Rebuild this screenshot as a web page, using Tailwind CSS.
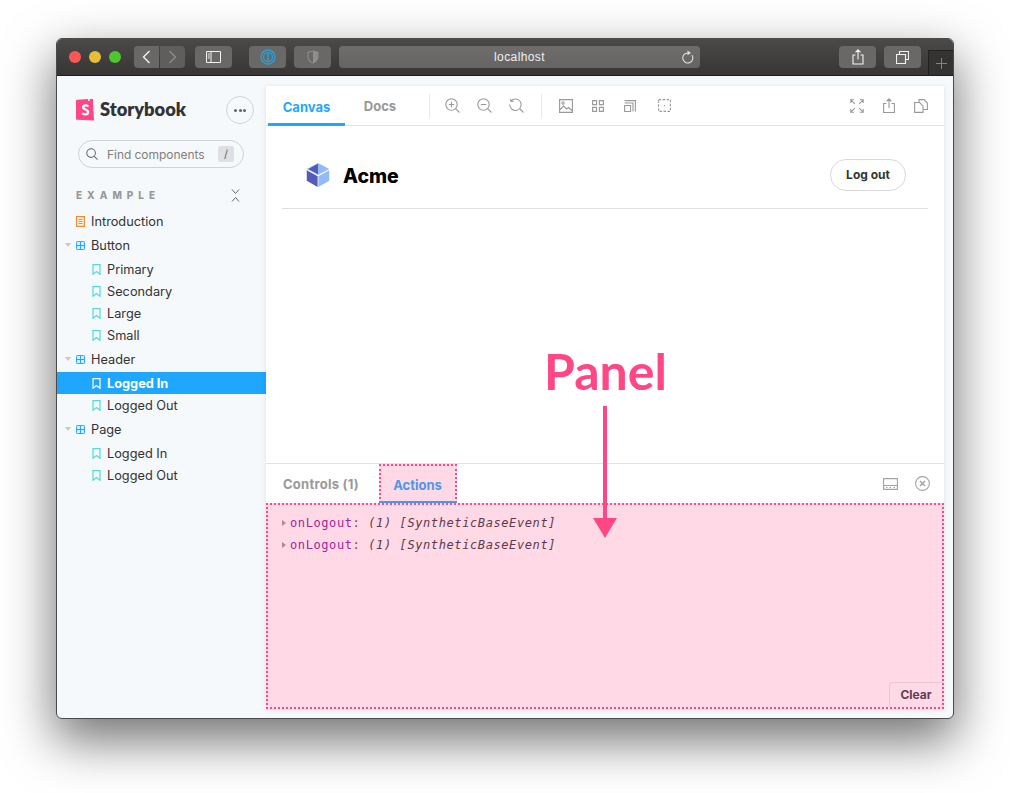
<!DOCTYPE html>
<html lang="en">
<head>
    <meta charset="UTF-8">
    <meta name="viewport" content="width=device-width, initial-scale=1.0">
    <title>Storybook panel</title>
    <script src="https://cdn.jsdelivr.net/npm/@tailwindcss/browser@4"></script>
</head>
<body class="bg-white h-[793px] overflow-hidden font-['Inter','Noto_Sans',sans-serif]">
    <!-- Icon set -->
    <svg class="hidden">
        <symbol id="bookmark" viewBox="0 0 9 11"><path d="M1 .7h7v9.6L4.500 7.600 1 10.300z" fill="none" stroke="currentColor" stroke-width="1.200"/></symbol>
        <symbol id="grid" viewBox="0 0 10 10"><path d="M1.500.5h7a1 1 0 0 1 1 1v7a1 1 0 0 1-1 1h-7a1 1 0 0 1-1-1v-7a1 1 0 0 1 1-1zM5 .5v9M.5 5h9" fill="#d8eefe" stroke="currentColor" stroke-width="1.100"/></symbol>
        <symbol id="caret" viewBox="0 0 6 4"><path d="M0 0h6L3 4z" fill="currentColor"/></symbol>
    </svg>

    <!-- Safari window -->
    <div class="ml-[56px] mt-[38px] w-[898px] h-[681px] flex flex-col rounded-[6px] border border-[#4a4a4a] bg-[#f6f9fc] shadow-[0_20px_50px_2px_rgba(0,0,0,0.55)] overflow-hidden">
        <!-- Title bar -->
        <div class="h-[37px] shrink-0 flex items-start pt-[7px] bg-gradient-to-b from-[#4c4a48] to-[#383634] border-b border-[#1f1e1d] relative">
            <div class="w-[12px] h-[12px] ml-[12px] mt-[5px] rounded-full bg-[#fc5753]"></div>
            <div class="w-[12px] h-[12px] ml-[8px] mt-[5px] rounded-full bg-[#e6bd35]"></div>
            <div class="w-[12px] h-[12px] ml-[8px] mt-[5px] rounded-full bg-[#4fc52f]"></div>
            <div class="ml-[13px] w-[25px] h-[22px] rounded-l-[4px] bg-[#696866] flex items-center justify-center">
                <svg width="9" height="14" viewBox="0 0 9 14"><path d="M7.500 1 1.500 7l6 6" fill="none" stroke="#f2f2f2" stroke-width="1.400"/></svg>
            </div>
            <div class="ml-px w-[25px] h-[22px] rounded-r-[4px] bg-[#5f5e5c] flex items-center justify-center">
                <svg width="9" height="14" viewBox="0 0 9 14"><path d="M1.500 1l6 6-6 6" fill="none" stroke="#8e8d8b" stroke-width="1.400"/></svg>
            </div>
            <div class="ml-[10px] w-[37px] h-[22px] rounded-[4px] bg-[#696866] flex items-center justify-center">
                <svg width="15" height="12" viewBox="0 0 15 12"><path d="M.5.5h14v11H.5zM5 .5v11M1.800 3h2M1.800 5h2M1.800 7h2" fill="none" stroke="#f2f2f2"/></svg>
            </div>
            <div class="ml-[17px] w-[37px] h-[22px] rounded-[4px] bg-[#696866] flex items-center justify-center">
                <svg width="16" height="16" viewBox="0 0 16 16"><circle cx="8" cy="8" r="7" fill="none" stroke="#2a9fd8" stroke-width="1.300"/><circle cx="8" cy="8" r="4.500" fill="none" stroke="#2a9fd8" stroke-width="1.300"/><path d="M8 4.500v7" stroke="#2a9fd8" stroke-width="1.600"/></svg>
            </div>
            <div class="ml-[8px] w-[37px] h-[22px] rounded-[4px] bg-[#696866] flex items-center justify-center">
                <svg width="12" height="14" viewBox="0 0 12 14"><path d="M6 .5 11.500 2v4.500c0 3.500-2.500 5.800-5.500 7-3-1.200-5.500-3.500-5.500-7V2z" fill="#8f8e8c"/><path d="M6 1.500v11c-2.300-1-4.500-3-4.500-6V2.800z" fill="#696866"/></svg>
            </div>
            <div class="ml-[8px] w-[361px] h-[22px] rounded-[4px] bg-gradient-to-b from-[#6e6d6b] to-[#656462] flex items-center justify-center relative">
                <span class="text-[12px] text-[#f0f0f0] font-['Liberation_Sans',sans-serif] tracking-[0.4px]">localhost</span>
                <svg class="absolute right-[6px] top-[4px]" width="13" height="14" viewBox="0 0 13 14"><path d="M10.800 5A5 5 0 1 1 7 3" fill="none" stroke="#dedede" stroke-width="1.100"/><path d="M6.500 .5 10 3 6.500 5.300z" fill="#dedede"/></svg>
            </div>
            <div class="ml-[139px] w-[37px] h-[22px] rounded-[4px] bg-[#696866] flex items-center justify-center">
                <svg width="12" height="16" viewBox="0 0 12 16"><path d="M3.500 6H1v9h10V6H8.500M6 10.500V1M3.500 3.300 6 .8l2.500 2.500" fill="none" stroke="#f2f2f2" stroke-width="1.100"/></svg>
            </div>
            <div class="ml-[8px] w-[37px] h-[22px] rounded-[4px] bg-[#696866] flex items-center justify-center">
                <svg width="13" height="13" viewBox="0 0 13 13"><path d="M3.500 3V.5h9v8H10M.5 3.500h9v9h-9z" fill="none" stroke="#f2f2f2" stroke-width="1.100"/></svg>
            </div>
            <!-- New tab button -->
            <div class="absolute right-0 bottom-0 w-[25px] h-[25px] bg-[#353331] border-l border-t border-[#222] flex items-center justify-center">
                <svg width="11" height="11" viewBox="0 0 11 11"><path d="M5.500 0v11M0 5.500h11" stroke="#85837f"/></svg>
            </div>
        </div>

        <div class="flex-1 flex min-h-0">
            <!-- Sidebar -->
            <aside class="w-[209px] shrink-0 pt-[20px] text-[12.75px] text-[#333]">
                <div class="h-[28px] pl-[19px] pr-[12px] flex items-center justify-between">
                    <div class="flex items-center">
                        <svg width="18" height="22" viewBox="0 0 18 22">
                            <path d="M1 .8 12.300.1l-.1 2 1.500-.1.100-2L17 0l1 21.500-17-.8a1 1 0 0 1-1-1V1.800a1 1 0 0 1 1-1z" fill="#ff4785"/>
                            <path d="M12.300 7.500c-.7-1.400-5-1.900-5.200.6-.2 2.800 5.300 2 5 5.300-.2 2.600-4.600 2.400-5.700.6" fill="none" stroke="#fff" stroke-width="2.300"/>
                        </svg>
                        <span class="ml-[6px] text-[18.3px] font-extrabold text-[#333] font-['Lato','Noto_Sans',sans-serif]">Storybook</span>
                    </div>
                    <div class="w-[28px] h-[28px] rounded-full border border-[#cfd3d6] flex items-center justify-center gap-[1.500px]">
                        <span class="w-[3px] h-[3px] rounded-full bg-[#666]"></span>
                        <span class="w-[3px] h-[3px] rounded-full bg-[#666]"></span>
                        <span class="w-[3px] h-[3px] rounded-full bg-[#666]"></span>
                    </div>
                </div>
                <div class="mt-[16px] ml-[21px] mr-[22px] h-[28px] rounded-full border border-[#cfd3d6] flex items-center pl-[7px] pr-[9px]">
                    <svg width="12" height="12" viewBox="0 0 13 13"><circle cx="5.500" cy="5.500" r="4.700" fill="none" stroke="#666" stroke-width="1.100"/><path d="m9 9 3.500 3.500" stroke="#666" stroke-width="1.100"/></svg>
                    <span class="ml-[9px] mt-[2px] text-[12px] text-[#808080] tracking-[-0.05px]">Find components</span>
                    <span class="ml-auto w-[16px] h-[16px] rounded-[2px] bg-[#dde1e4] text-[11px] text-[#666] flex items-center justify-center">/</span>
                </div>
                <div class="mt-[19px] h-[16px] pl-[19px] pr-[26px] flex items-center justify-between">
                    <span class="text-[10px] font-extrabold tracking-[5px] text-[#999]">EXAMPLE</span>
                    <svg width="9" height="13" viewBox="0 0 9 13"><path d="m1 .5 3.500 4 3.500-4M1 12.500l3.500-4 3.500 4" fill="none" stroke="#666" stroke-width="1"/></svg>
                </div>

                <!-- Tree -->
                <div class="mt-[7px] [&_span]:mt-[2px]">
                    <div class="h-[22px] pl-[19px] flex items-center">
                        <svg class="mr-[6px]" width="9" height="11" viewBox="0 0 9 11"><path d="M.6.6h7.800v9.800H.6z" fill="#fff3e6" stroke="#f58a2e" stroke-width="1.200"/><path d="M2.500 3.500h4M2.500 5.500h4M2.500 7.500h4" stroke="#f58a2e"/></svg>
                        <span>Introduction</span>
                    </div>
                    <div class="mt-0.5 h-[22px] pl-[8px] flex items-center">
                        <svg class="mr-[5px] text-[#c8c8c8]" width="6" height="4"><use href="#caret"/></svg>
                        <svg class="mr-[6px] text-[#1ea7fd]" width="9" height="9"><use href="#grid"/></svg>
                        <span>Button</span>
                    </div>
                    <div class="mt-0.5 h-[22px] pl-[35px] flex items-center">
                        <svg class="mr-[6px] text-[#4fdcd8]" width="9" height="11"><use href="#bookmark"/></svg>
                        <span>Primary</span>
                    </div>
                    <div class="h-[22px] pl-[35px] flex items-center">
                        <svg class="mr-[6px] text-[#4fdcd8]" width="9" height="11"><use href="#bookmark"/></svg>
                        <span>Secondary</span>
                    </div>
                    <div class="h-[22px] pl-[35px] flex items-center">
                        <svg class="mr-[6px] text-[#4fdcd8]" width="9" height="11"><use href="#bookmark"/></svg>
                        <span>Large</span>
                    </div>
                    <div class="h-[22px] pl-[35px] flex items-center">
                        <svg class="mr-[6px] text-[#4fdcd8]" width="9" height="11"><use href="#bookmark"/></svg>
                        <span>Small</span>
                    </div>
                    <div class="mt-0.5 h-[22px] pl-[8px] flex items-center">
                        <svg class="mr-[5px] text-[#c8c8c8]" width="6" height="4"><use href="#caret"/></svg>
                        <svg class="mr-[6px] text-[#1ea7fd]" width="9" height="9"><use href="#grid"/></svg>
                        <span>Header</span>
                    </div>
                    <div class="mt-0.5 h-[22px] pl-[35px] flex items-center bg-[#1ea7fd] text-white font-bold">
                        <svg class="mr-[6px] text-white" width="9" height="11"><use href="#bookmark"/></svg>
                        <span>Logged In</span>
                    </div>
                    <div class="h-[22px] pl-[35px] flex items-center">
                        <svg class="mr-[6px] text-[#4fdcd8]" width="9" height="11"><use href="#bookmark"/></svg>
                        <span>Logged Out</span>
                    </div>
                    <div class="mt-0.5 h-[22px] pl-[8px] flex items-center">
                        <svg class="mr-[5px] text-[#c8c8c8]" width="6" height="4"><use href="#caret"/></svg>
                        <svg class="mr-[6px] text-[#1ea7fd]" width="9" height="9"><use href="#grid"/></svg>
                        <span>Page</span>
                    </div>
                    <div class="mt-0.5 h-[22px] pl-[35px] flex items-center">
                        <svg class="mr-[6px] text-[#4fdcd8]" width="9" height="11"><use href="#bookmark"/></svg>
                        <span>Logged In</span>
                    </div>
                    <div class="h-[22px] pl-[35px] flex items-center">
                        <svg class="mr-[6px] text-[#4fdcd8]" width="9" height="11"><use href="#bookmark"/></svg>
                        <span>Logged Out</span>
                    </div>
                </div>
            </aside>

            <!-- Main area -->
            <div class="flex-1 min-w-0 pt-[10px] pr-[9px] pb-[9px]">
                <main class="relative h-full flex flex-col bg-white shadow-[0_1px_5px_rgba(0,0,0,0.1)]">
                    <!-- Toolbar -->
                    <div class="h-[40px] shrink-0 pl-[2px] pr-[7px] flex items-center border-b border-[#e3e3e3] text-[#999]">
                        <div class="w-[77px] h-full flex items-center justify-center text-[13px] font-bold text-[#1ea7fd] border-b-[3px] border-[#1ea7fd] translate-y-px pt-[5px]">Canvas</div>
                        <div class="w-[70px] h-full flex items-center justify-center text-[13px] font-bold pt-[2px]">Docs</div>
                        <div class="ml-[14px] w-px h-[24px] bg-[#e8e8e8]"></div>
                        <div class="ml-[6px] w-[32px] flex justify-center">
                            <svg width="15" height="15" viewBox="0 0 15 15" fill="none" stroke="#999" stroke-width="1.100"><circle cx="6.500" cy="6.500" r="5.700"/><path d="m10.700 10.700 3.800 3.800M3.800 6.500h5.400M6.500 3.800v5.400"/></svg>
                        </div>
                        <div class="w-[32px] flex justify-center">
                            <svg width="15" height="15" viewBox="0 0 15 15" fill="none" stroke="#999" stroke-width="1.100"><circle cx="6.500" cy="6.500" r="5.700"/><path d="m10.700 10.700 3.800 3.800M3.800 6.500h5.400"/></svg>
                        </div>
                        <div class="w-[32px] flex justify-center">
                            <svg width="15" height="15" viewBox="0 0 15 15" fill="none" stroke="#999" stroke-width="1.100"><path d="M2 3.200a5.700 5.700 0 1 1-1.200 3.300M10.700 10.700l3.800 3.800M1.500 .8l.4 2.700 2.700-.2"/></svg>
                        </div>
                        <div class="ml-[9px] w-px h-[24px] bg-[#e8e8e8]"></div>
                        <div class="ml-[8px] w-[32px] flex justify-center">
                            <svg width="14" height="14" viewBox="0 0 14 14" fill="none" stroke="#999" stroke-width="1.100"><path d="M.6.600h12.800v12.800H.6zM.6 11l4-4 3 3 2-1.500 3.800 3.500"/><circle cx="4" cy="4" r="1.200"/></svg>
                        </div>
                        <div class="w-[32px] flex justify-center">
                            <svg width="12" height="12" viewBox="0 0 12 12" fill="none" stroke="#999" stroke-width="1.100"><path d="M.6.600h4v4h-4zM7.400.6h4v4h-4zM.6 7.400h4v4h-4zM7.400 7.400h4v4h-4z"/></svg>
                        </div>
                        <div class="w-[32px] flex justify-center">
                            <svg width="12" height="12" viewBox="0 0 12 12" fill="none" stroke="#999" stroke-width="1.100"><path d="M.6 5.500h6v6h-6zM.6 3h8.400v8.500M.6.600h10.800v10.900"/></svg>
                        </div>
                        <div class="ml-[2px] w-[32px] flex justify-center">
                            <svg width="13" height="13" viewBox="0 0 13 13" fill="none" stroke="#999" stroke-width="1.100" stroke-dasharray="2.500 1.500"><path d="M.6.600h11.800v11.800H.6z"/><path d="M6.500 6v1" /></svg>
                        </div>
                        <div class="ml-auto w-[32px] flex justify-center">
                            <svg width="14" height="14" viewBox="0 0 14 14" fill="none" stroke="#999" stroke-width="1.100"><path d="m.8.800 4 4M9.200 4.800l4-4M.8 13.200l4-4M13.200 13.200l-4-4M.8 4V.8H4M10 .8h3.200V4M.8 10v3.200H4M10 13.200h3.200V10"/></svg>
                        </div>
                        <div class="w-[32px] flex justify-center">
                            <svg width="12" height="15" viewBox="0 0 12 15" fill="none" stroke="#999" stroke-width="1.100"><path d="M3.500 5.500H.6v9h10.800v-9H8.500M6 10V1M3.500 3.300 6 .8l2.500 2.500"/></svg>
                        </div>
                        <div class="w-[32px] flex justify-center">
                            <svg width="14" height="14" viewBox="0 0 14 14" fill="none" stroke="#999" stroke-width="1.100"><path d="M5 3.500V.6h5l3.400 3.400v6.500H9.500M.6 3.500h5l3.400 3.400v6.500H.6z"/></svg>
                        </div>
                    </div>

                    <!-- Canvas -->
                    <div class="flex-1 min-h-0 px-[16px]">
                        <div class="h-[83px] flex items-center justify-between pl-[24px] pr-[22px] pt-[16px] border-b border-[#dfdfdf]">
                            <div class="flex items-center">
                                <svg width="24" height="24" viewBox="0 0 32 32">
                                    <path d="M16 0 1 8l15 8 15-8z" fill="#91baf8"/>
                                    <path d="M16 1v14L3 8z" fill="#555ab9"/>
                                    <path d="M1 9.500v14L15.500 32V17.500z" fill="#555ab9"/>
                                    <path d="M31 9.500v14L16.500 32V17.500z" fill="#91baf8"/>
                                </svg>
                                <span class="ml-[13px] mt-[4px] text-[19.5px] font-extrabold text-black">Acme</span>
                            </div>
                            <div class="w-[76px] h-[32px] rounded-full border border-[#d9d9d9] flex items-center justify-center text-[12px] font-bold text-[#333]">Log out</div>
                        </div>
                    </div>

                    <!-- Addon panel -->
                    <div class="h-[246px] shrink-0 flex flex-col border-t border-[#e3e3e3]">
                        <div class="h-[39px] shrink-0 pl-[2px] pr-[14px] flex items-center">
                            <div class="w-[111px] pl-[15px] pt-[2px] text-[13px] tracking-[0.25px] font-bold text-[#999]">Controls (1)</div>
                            <div class="w-[78px] h-full flex items-center justify-center pt-[2px] pr-[1px] text-[13px] font-bold text-[#4a98e8] bg-[#ffd9e6] border-2 border-b-0 border-dotted border-[#ff4785] relative">
                                Actions
                                <div class="absolute left-[-2px] right-[-2px] bottom-[-1px] h-[3px] bg-[#4a98e8]"></div>
                            </div>
                            <div class="ml-auto flex items-center gap-[17px]">
                                <svg width="15" height="12" viewBox="0 0 15 12" fill="none" stroke="#a3a3a3" stroke-width="1.100"><path d="M.6.600h13.800v10.800H.6zM.6 7.500h13.800"/><path d="M3 9.500h1.500M6.500 9.500H8M10.500 9.500H12" stroke-width="1.200"/></svg>
                                <svg width="15" height="15" viewBox="0 0 15 15" fill="none" stroke="#a3a3a3" stroke-width="1.100"><circle cx="7.500" cy="7.500" r="6.900"/><path d="m5 5 5 5M10 5l-5 5" stroke-width="1.500"/></svg>
                            </div>
                        </div>
                        <div class="relative flex-1 min-h-0 border-2 border-dotted border-[#ff4785] bg-[#ffd9e6] pl-[14px] pt-[7px] font-['DejaVu_Sans_Mono',monospace] text-[12px] tracking-[0.6px] leading-[22px]">
                            <div class="flex items-center">
                                <svg class="mr-[4px] text-[#a98a98]" width="4" height="6" viewBox="0 0 4 6"><path d="M0 0v6l4-3z" fill="currentColor"/></svg>
                                <span class="text-[#a3249c]">onLogout</span><span class="text-[#6b4a5a]">:&nbsp;</span><span class="italic text-[#5c3a4c]">(1) [SyntheticBaseEvent]</span>
                            </div>
                            <div class="flex items-center">
                                <svg class="mr-[4px] text-[#a98a98]" width="4" height="6" viewBox="0 0 4 6"><path d="M0 0v6l4-3z" fill="currentColor"/></svg>
                                <span class="text-[#a3249c]">onLogout</span><span class="text-[#6b4a5a]">:&nbsp;</span><span class="italic text-[#5c3a4c]">(1) [SyntheticBaseEvent]</span>
                            </div>
                            <div class="absolute right-0 bottom-0 w-[53px] h-[25px] rounded-tl-[4px] border-l border-t border-[#eac6d3] flex items-center justify-center font-['Inter',sans-serif] text-[12px] tracking-normal font-bold text-[#5f3c4e]">Clear</div>
                        </div>
                    </div>

                    <!-- Annotation over the story -->
                    <div class="absolute left-[278px] top-[253px] text-[50px] leading-[64px] font-bold text-[#ff4785] font-['Lato','Noto_Sans',sans-serif]">Panel</div>
                    <svg class="absolute left-[327px] top-[320px]" width="24" height="132" viewBox="0 0 24 132"><path d="M10 0h4v112h-4z" fill="#ff4785"/><path d="M0 112h24l-12 20z" fill="#ff4785"/></svg>
                </main>
            </div>
        </div>
    </div>
</body>
</html>
